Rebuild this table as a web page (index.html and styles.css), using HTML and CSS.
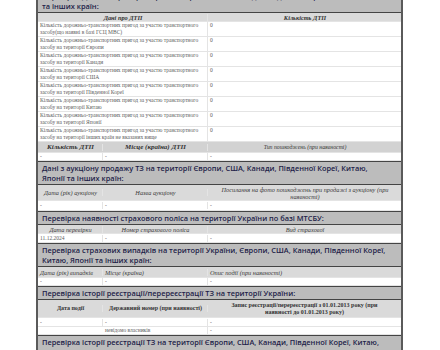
FILE: index.html
```html
<!DOCTYPE html>
<html lang="uk">
<head>
<meta charset="utf-8">
<link rel="stylesheet" href="styles.css">
</head>
<body>
<div class="doc">
  <section class="block">
    <h2 class="title">Перевірка ДТП на території України, Європи, США, Канади, Південної Кореї, Китаю, Японії<br>та інших країн:</h2>
    <div class="row cols2 head h9"><div class="cell">Дані про ДТП</div><div class="cell">Кількість ДТП</div></div>
    <div class="row cols2 data h15"><div class="cell">Кількість дорожньо-транспортних пригод за участю транспортного засобу(що наявні в базі ГСЦ МВС)</div><div class="cell">0</div></div>
    <div class="row cols2 data h15"><div class="cell">Кількість дорожньо-транспортних пригод за участю транспортного засобу на території Європи</div><div class="cell">0</div></div>
    <div class="row cols2 data h15"><div class="cell">Кількість дорожньо-транспортних пригод за участю транспортного засобу на території Канади</div><div class="cell">0</div></div>
    <div class="row cols2 data h15"><div class="cell">Кількість дорожньо-транспортних пригод за участю транспортного засобу на території США</div><div class="cell">0</div></div>
    <div class="row cols2 data h15"><div class="cell">Кількість дорожньо-транспортних пригод за участю транспортного засобу на території Південної Кореї</div><div class="cell">0</div></div>
    <div class="row cols2 data h15"><div class="cell">Кількість дорожньо-транспортних пригод за участю транспортного засобу на території Китаю</div><div class="cell">0</div></div>
    <div class="row cols2 data h15"><div class="cell">Кількість дорожньо-транспортних пригод за участю транспортного засобу на території Японії</div><div class="cell">0</div></div>
    <div class="row cols2 data h15"><div class="cell">Кількість дорожньо-транспортних пригод за участю транспортного засобу на території інших країн не вказаних вище</div><div class="cell">0</div></div>
    <div class="row cols3 head big h11"><div class="cell">Кількість ДТП</div><div class="cell">Місце (країна) ДТП</div><div class="cell small">Тип пошкоджень (при наявності)</div></div>
    <div class="row cols3 data h8"><div class="cell">-</div><div class="cell">-</div><div class="cell">-</div></div>
  </section>

  <section class="block">
    <h2 class="title">Дані з аукціону продажу ТЗ на території Європи, США, Канади, Південної Кореї, Китаю,<br>Японії та інших країн:</h2>
    <div class="row cols3 head light h16"><div class="cell">Дата (рік) аукціону</div><div class="cell">Назва аукціону</div><div class="cell">Посилання на фото пошкоджень при продажі з аукціону (при наявності)</div></div>
    <div class="row cols3 data mid h10"><div class="cell">-</div><div class="cell">-</div><div class="cell">-</div></div>
  </section>

  <section class="block">
    <h2 class="title">Перевірка наявності страхового поліса на території України по базі МТСБУ:</h2>
    <div class="row cols3 head light h9"><div class="cell">Дата перевірки</div><div class="cell">Номер страхового поліса</div><div class="cell">Вид страхової</div></div>
    <div class="row cols3 data mid h9"><div class="cell">11.12.2024</div><div class="cell">-</div><div class="cell">-</div></div>
  </section>

  <section class="block">
    <h2 class="title">Перевірка страхових випадків на території України, Європи, США, Канади, Південної Кореї, Китаю, Японії та інших країн:</h2>
    <div class="row cols3 head light left h11"><div class="cell">Дата (рік) випадків</div><div class="cell">Місце (країна)</div><div class="cell">Опис події (при наявності)</div></div>
    <div class="row cols3 data mid h8"><div class="cell">-</div><div class="cell">-</div><div class="cell">-</div></div>
  </section>

  <section class="block">
    <h2 class="title">Перевірка історії реєстрації/перереєстрації ТЗ на території України:</h2>
    <div class="row cols3 head upright h18"><div class="cell">Дата події</div><div class="cell">Державний номер (при наявності)</div><div class="cell wide-pad">Запис реєстрації/перереєстрації з 01.01.2013 року (при наявності до 01.01.2013 року)</div></div>
    <div class="row cols3 data mid h9"><div class="cell">-</div><div class="cell">-</div><div class="cell">-</div></div>
    <div class="row cols3 data mid h8"><div class="cell"></div><div class="cell">невідомо власників</div><div class="cell">-</div></div>
  </section>

  <section class="block">
    <h2 class="title">Перевірка історії реєстрації ТЗ на території Європи, США, Канади, Південної Кореї, Китаю, Японії та інших країн:</h2>
  </section>
</div>
</body>
</html>
```

FILE: styles.css
```css
* { box-sizing: border-box; }

html, body {
  margin: 0;
  padding: 0;
  background: #ffffff;
}

.doc {
  width: 367px;
  margin: -11px 0 0 36px;
  border-left: 2px solid #5a5a5a;
  border-right: 2px solid #5a5a5a;
  background: #ffffff;
}

.title {
  margin: 0;
  padding: 1px 4px;
  background: #bcbcbc;
  border-top: 1px solid #444;
  border-bottom: 1px solid #444;
  color: #1c1c48;
  font-family: "Open Sans", "DejaVu Sans", sans-serif;
  font-weight: 600;
  font-size: 7.4px;
  line-height: 10px;
}

.row {
  display: grid;
  border-bottom: 1px solid #e4e4e4;
  font-family: "Liberation Serif", "DejaVu Serif", serif;
}

.cols2 { grid-template-columns: 170px 1fr; }
.cols3 { grid-template-columns: 65px 105px 1fr; }

.cell {
  padding: 0 1px 0 2px;
  border-right: 1px solid #e4e4e4;
}
.cell:last-child { border-right: none; }

.data {
  background: #ffffff;
  color: #5c5c5c;
  font-size: 5.5px;
  line-height: 7px;
  align-items: start;
}
.data.mid { align-items: center; }

.head {
  background: #dadada;
  color: #333;
  font-size: 6.3px;
  line-height: 7px;
  font-weight: bold;
  font-style: italic;
  text-align: center;
  align-items: center;
}
.head.big { font-size: 7px; background: #d2d2d2; }
.head.big .small { font-size: 5.8px; font-weight: normal; }
.head.light { font-weight: normal; color: #3a3a3a; }
.head.left { text-align: left; }
.head.upright { font-style: normal; font-size: 6px; }
.head .wide-pad { padding: 0 14px; }

.h8 { height: 8px; }
.h9 { height: 9px; }
.h10 { height: 10px; }
.h11 { height: 11px; }
.h15 { height: 15px; }
.h16 { height: 16px; }
.h18 { height: 18px; }
```
